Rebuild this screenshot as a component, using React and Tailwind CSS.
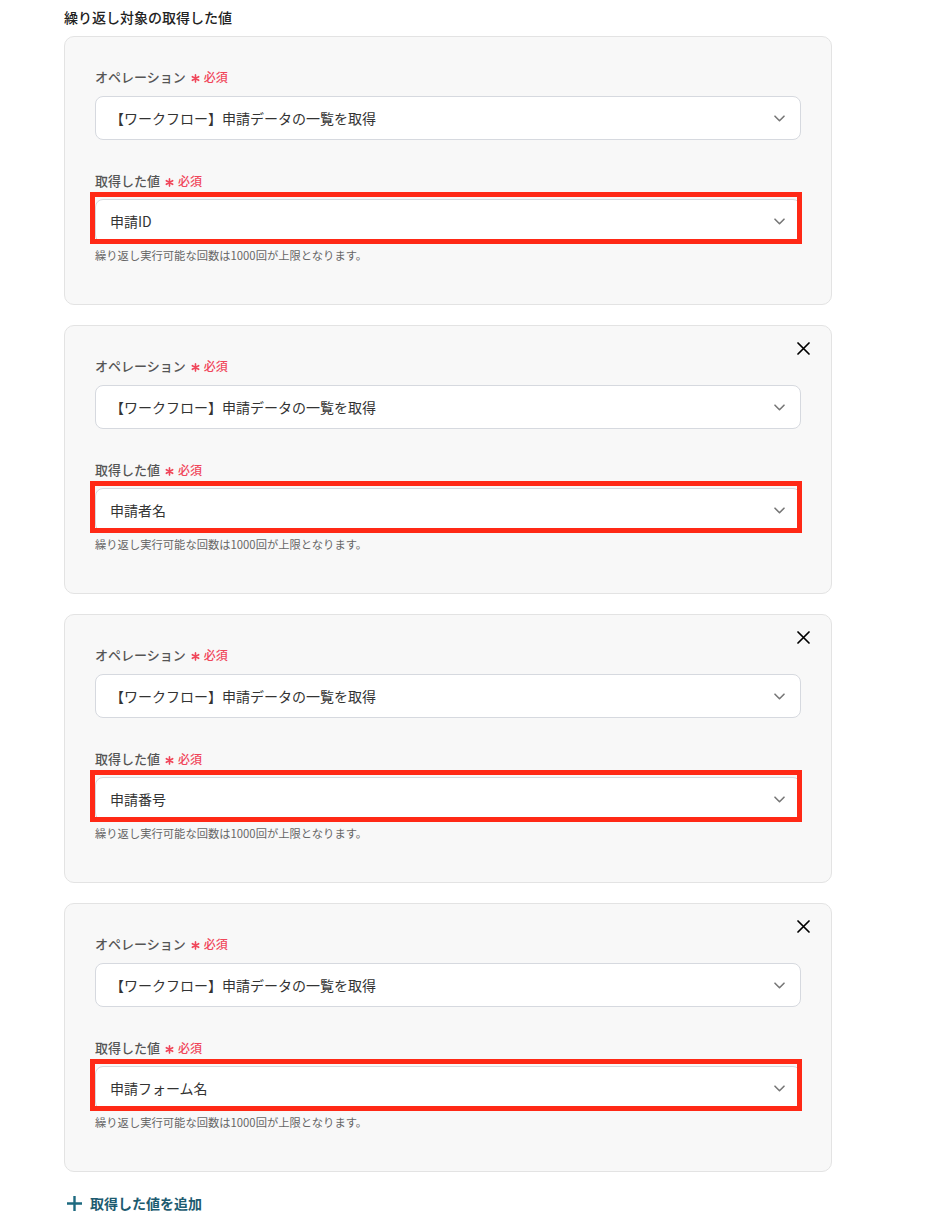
const values = ['申請ID', '申請者名', '申請番号', '申請フォーム名']

function Label({ children }) {
  return (
    <div className="flex items-center h-5 text-[13px] font-medium text-[#555]">
      <span>{children}</span>
      <span className="ml-[5px] flex items-center text-[#f0465a] text-[12px] font-medium">
        <svg className="w-[9px] h-[9px] mr-[4px] mt-[3px]" viewBox="0 0 10 10" fill="none" stroke="currentColor" strokeWidth="1.8" strokeLinecap="round">
          <path d="M5 1v8M1.5 3l7 4M8.5 3l-7 4" />
        </svg>
        必須
      </span>
    </div>
  )
}

function Chevron() {
  return (
    <svg className="w-[11px] h-[7px] text-[#777]" viewBox="0 0 11 7" fill="none" stroke="currentColor" strokeWidth="1.6" strokeLinecap="round" strokeLinejoin="round">
      <path d="M1 1.2l4.5 4.5L10 1.2" />
    </svg>
  )
}

function Select({ value }) {
  return (
    <div className="h-[44px] bg-white border border-[#d6d9df] rounded-lg flex items-center justify-between pl-[14px] pr-[15px] text-[14px] text-[#333]">
      <span>{value}</span>
      <Chevron />
    </div>
  )
}

function Card({ value, removable }) {
  return (
    <div className="relative bg-[#f8f8f8] border border-[#e3e3e3] rounded-[10px] h-[269px] px-[30px] pt-[30px]">
      {removable && (
        <button className="absolute top-[16px] right-[21px] text-black">
          <svg className="w-[13px] h-[13px]" viewBox="0 0 13 13" fill="none" stroke="currentColor" strokeWidth="1.7" strokeLinecap="round">
            <path d="M1 1l11 11M12 1L1 12" />
          </svg>
        </button>
      )}
      <Label>オペレーション</Label>
      <div className="mt-[9px]">
        <Select value="【ワークフロー】申請データの一覧を取得" />
      </div>
      <div className="mt-[31px]">
        <Label>取得した値</Label>
      </div>
      <div className="relative mt-[8px]">
        <Select value={value} />
        <div className="absolute -left-[5px] -top-[7px] -right-[1px] -bottom-[1px] border-[5px] border-[#ff2916] pointer-events-none" />
      </div>
      <p className="mt-[4px] text-[11.3px] leading-4 text-[#666]">繰り返し実行可能な回数は1000回が上限となります。</p>
    </div>
  )
}

export default function App() {
  return (
    <div className="w-[942px] min-h-[1224px] bg-white pl-[64px] pt-[7px]" style={{ fontFamily: '"Noto Sans CJK JP", "Noto Sans", sans-serif' }}>
      <div className="w-[768px]">
        <h2 className="text-[14px] leading-5 font-medium text-[#222]">繰り返し対象の取得した値</h2>
        <div className="mt-[9px] flex flex-col gap-[20px]">
          {values.map((v, i) => (
            <Card key={v} value={v} removable={i > 0} />
          ))}
        </div>
        <button className="mt-[21px] flex items-center gap-[8px] text-[14px] font-bold text-[#1d5b70]">
          <svg className="w-[15px] h-[15px] ml-[3px]" viewBox="0 0 15 15" fill="none" stroke="#1d6a80" strokeWidth="2.4">
            <path d="M7.5 0v15M0 7.5h15" />
          </svg>
          取得した値を追加
        </button>
      </div>
    </div>
  )
}
